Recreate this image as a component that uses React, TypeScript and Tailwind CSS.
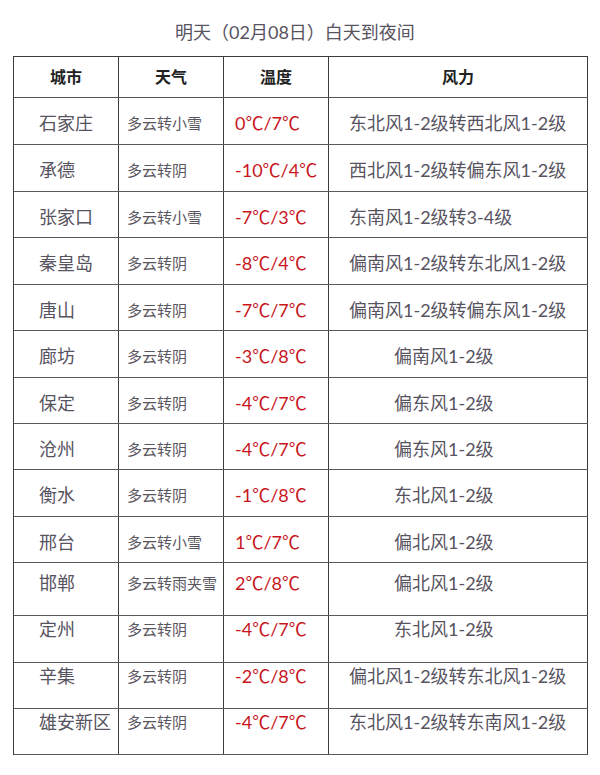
const rows = [
  { city: "石家庄", weather: "多云转小雪", temp: "0℃/7℃", wind: "东北风1-2级转西北风1-2级", h: "h-[47px]" },
  { city: "承德", weather: "多云转阴", temp: "-10℃/4℃", wind: "西北风1-2级转偏东风1-2级", h: "h-[47px]" },
  { city: "张家口", weather: "多云转小雪", temp: "-7℃/3℃", wind: "东南风1-2级转3-4级", h: "h-[46px]" },
  { city: "秦皇岛", weather: "多云转阴", temp: "-8℃/4℃", wind: "偏南风1-2级转东北风1-2级", h: "h-[47px]" },
  { city: "唐山", weather: "多云转阴", temp: "-7℃/7℃", wind: "偏南风1-2级转偏东风1-2级", h: "h-[46px]" },
  { city: "廊坊", weather: "多云转阴", temp: "-3℃/8℃", wind: "偏南风1-2级", h: "h-[47px]" },
  { city: "保定", weather: "多云转阴", temp: "-4℃/7℃", wind: "偏东风1-2级", h: "h-[46px]" },
  { city: "沧州", weather: "多云转阴", temp: "-4℃/7℃", wind: "偏东风1-2级", h: "h-[46px]" },
  { city: "衡水", weather: "多云转阴", temp: "-1℃/8℃", wind: "东北风1-2级", h: "h-[47px]" },
  { city: "邢台", weather: "多云转小雪", temp: "1℃/7℃", wind: "偏北风1-2级", h: "h-[46px]" },
  { city: "邯郸", weather: "多云转雨夹雪", temp: "2℃/8℃", wind: "偏北风1-2级", h: "h-[53px]", top: "pt-[8px]" },
  { city: "定州", weather: "多云转阴", temp: "-4℃/7℃", wind: "东北风1-2级", h: "h-[47px]", top: "pt-[1px]" },
  { city: "辛集", weather: "多云转阴", temp: "-2℃/8℃", wind: "偏北风1-2级转东北风1-2级", h: "h-[46px]", top: "pt-[1px]" },
  { city: "雄安新区", weather: "多云转阴", temp: "-4℃/7℃", wind: "东北风1-2级转东南风1-2级", h: "h-[46px]", top: "pt-[1px]" },
];

const font = "font-['Lato','Noto_Sans_CJK_SC',sans-serif]";

export default function App() {
  return (
    <div className={`w-[600px] h-[775px] bg-white ${font}`}>
      {/* 标题 */}
      <div className="w-[590px] pt-[19px] h-[56px] text-center text-[18px] leading-[26px] text-[#57535f]">
        明天（02月08日）白天到夜间
      </div>

      {/* 表格 */}
      <div className="ml-[13px] w-[575px] border-l border-t border-[#3c3c3c]">
        <div className="flex h-[41px] border-b border-[#555]">
          {["城市", "天气", "温度"].map((t) => (
            <div
              key={t}
              className="w-[105px] shrink-0 border-r border-[#3c3c3c] flex items-center justify-center text-[16px] font-bold text-[#222]"
            >
              {t}
            </div>
          ))}
          <div className="flex-1 border-r border-[#3c3c3c] flex items-center justify-center text-[16px] font-bold text-[#222]">
            风力
          </div>
        </div>

        {rows.map((r) => {
          const align = r.top ? `items-start ${r.top}` : "items-center pt-[4px]";
          const long = r.wind.length > 8;
          return (
            <div key={r.city} className={`flex ${r.h} border-b border-[#5a5a5a]`}>
              <div className={`w-[105px] shrink-0 border-r border-[#3c3c3c] flex ${align} pl-[25px] text-[18px] leading-[24px] text-[#57535f] whitespace-nowrap`}>
                {r.city}
              </div>
              <div className={`w-[105px] shrink-0 border-r border-[#3c3c3c] flex ${align} pl-[8px] text-[15px] leading-[24px] text-[#5a5660] whitespace-nowrap`}>
                {r.weather}
              </div>
              <div className={`w-[105px] shrink-0 border-r border-[#3c3c3c] flex ${align} pl-[11px] text-[18px] leading-[24px] text-[#c8161d] whitespace-nowrap`}>
                {r.temp}
              </div>
              <div
                className={`flex-1 border-r border-[#3c3c3c] flex ${align} ${long ? "pl-[20px]" : "pl-[65px]"} text-[18px] leading-[24px] text-[#57535f] whitespace-nowrap`}
              >
                {r.wind}
              </div>
            </div>
          );
        })}
      </div>
    </div>
  );
}
